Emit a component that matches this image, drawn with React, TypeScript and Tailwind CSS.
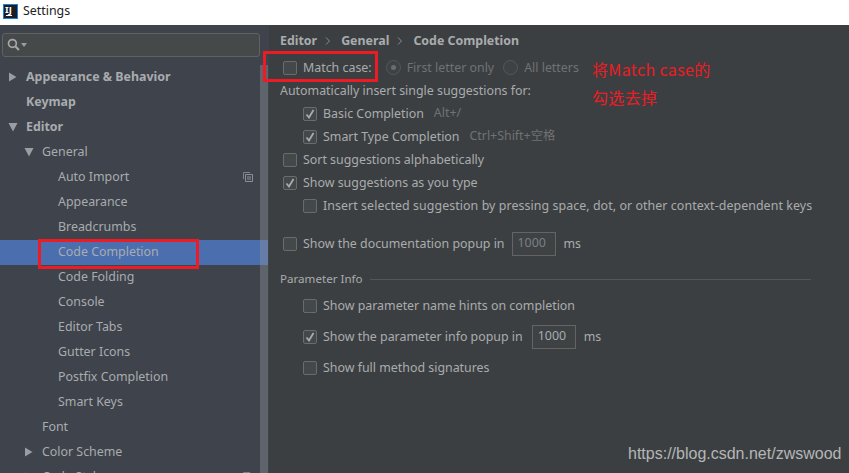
import React from "react";

type NavItem = {
  label: string;
  level: number;
  arrow?: "right" | "down";
  bold?: boolean;
  copy?: boolean;
  selected?: boolean;
};

const navItems: NavItem[] = [
  { label: "Appearance & Behavior", level: 0, arrow: "right", bold: true },
  { label: "Keymap", level: 0, bold: true },
  { label: "Editor", level: 0, arrow: "down", bold: true },
  { label: "General", level: 1, arrow: "down" },
  { label: "Auto Import", level: 2, copy: true },
  { label: "Appearance", level: 2 },
  { label: "Breadcrumbs", level: 2 },
  { label: "Code Completion", level: 2, selected: true },
  { label: "Code Folding", level: 2 },
  { label: "Console", level: 2 },
  { label: "Editor Tabs", level: 2 },
  { label: "Gutter Icons", level: 2 },
  { label: "Postfix Completion", level: 2 },
  { label: "Smart Keys", level: 2 },
  { label: "Font", level: 1 },
  { label: "Color Scheme", level: 1, arrow: "right" },
  { label: "Code Style", level: 1, arrow: "right", copy: true },
];

const Arrow = ({ dir }: { dir: "right" | "down" }) => (
  <svg width="10" height="10" viewBox="0 0 10 10" className="shrink-0">
    {dir === "right" ? (
      <path d="M1 0.5 L8.5 5 L1 9.5 Z" fill="#9a9da1" />
    ) : (
      <path d="M0.5 1 L9.5 1 L5 9.5 Z" fill="#9a9da1" />
    )}
  </svg>
);

const CopyIcon = () => (
  <svg width="10" height="10" viewBox="0 0 10 10" className="absolute left-[243px] top-[7px]">
    <path d="M0.5 7 V0.5 H7" fill="none" stroke="#7f8387" />
    <path d="M2.5 2.5 H9.5 V9.5 H2.5 Z M4 5 H8 M4 7 H8" fill="none" stroke="#8d9195" />
  </svg>
);

const Checkbox = ({ checked }: { checked?: boolean }) => (
  <span className="flex h-[14px] w-[14px] shrink-0 items-center justify-center rounded-[2px] border border-[#6b6b6b] bg-[#43494a]">
    {checked && (
      <svg width="10" height="10" viewBox="0 0 10 10">
        <path d="M1.5 5.5 L4 8.5 L8.5 1" fill="none" stroke="#a9abad" strokeWidth="1.8" />
      </svg>
    )}
  </span>
);

const Radio = ({ checked }: { checked?: boolean }) => (
  <span className="flex h-[15px] w-[15px] shrink-0 items-center justify-center rounded-full border border-[#555859] bg-[#3e4244]">
    {checked && <span className="h-[5px] w-[5px] rounded-full bg-[#6a6d6f]" />}
  </span>
);

const Chevron = () => (
  <svg width="6" height="8" viewBox="0 0 6 8" className="shrink-0">
    <path d="M1 0.5 L4.5 4 L1 7.5" fill="none" stroke="#8b8e90" />
  </svg>
);

const NumberBox = ({ dim }: { dim?: boolean }) => (
  <span
    className={`flex h-[24px] w-[44px] shrink-0 items-center border border-[#646464] bg-[#3e4244] pb-[2px] pl-[5px] leading-none ${dim ? "text-[#7c7f81]" : "text-[#a8abad]"}`}
  >
    1000
  </span>
);

const Option = ({
  label,
  checked,
  nested,
  hint,
  wide,
}: {
  label: string;
  checked?: boolean;
  nested?: boolean;
  hint?: string;
  wide?: boolean;
}) => (
  <div className={`flex h-[23px] items-center gap-[6px] whitespace-nowrap ${nested ? "pl-[23px]" : "pl-[3px]"}`}>
    <Checkbox checked={checked} />
    <span className={`mt-[2px] ${wide ? "tracking-[0.07px]" : ""}`}>{label}</span>
    {hint && <span className="ml-[4px] text-[#6f7274]">{hint}</span>}
  </div>
);

export default function App() {
  return (
    <div
      className="relative flex h-[473px] w-[849px] flex-col overflow-hidden bg-white text-[12.4px] text-[#a9acae]"
      style={{ fontFamily: '"Noto Sans", "Noto Sans CJK SC", sans-serif' }}
    >
      {/* TITLE BAR */}
      <div className="flex h-[25px] shrink-0 items-center gap-[5px] bg-white pb-[3px] pl-[3px] text-[#222]">
        <div className="relative h-[15px] w-[15px] border border-[#1f7fe0] bg-[#1b1f24]">
          <span className="absolute left-[1px] top-0 text-[9.5px] font-bold leading-[9px] text-white">IJ</span>
          <span className="absolute bottom-[2px] left-[2px] h-px w-[6px] bg-white" />
        </div>
        <span>Settings</span>
      </div>

      <div className="flex min-h-0 flex-1">
        {/* SIDEBAR */}
        <div className="relative flex w-[269px] shrink-0 flex-col bg-[#3e434c]">
          <div className="mx-[2px] mb-[8px] mt-[8px] flex h-[24px] w-[258px] shrink-0 items-center gap-px rounded-[3px] border border-[#5f6262] bg-[#45494a] pb-[1px] pl-[4px]">
            <svg width="13" height="13" viewBox="0 0 12 12">
              <circle cx="5" cy="5" r="3.6" fill="none" stroke="#a4a6a8" strokeWidth="1.6" />
              <path d="M7.8 7.8 L11 11" stroke="#a4a6a8" strokeWidth="2" />
            </svg>
            <svg width="6" height="4" viewBox="0 0 6 4">
              <path d="M0 0 H6 L3 4 Z" fill="#9a9da1" />
            </svg>
          </div>
          {navItems.map((item) => (
            <div
              key={item.label}
              className={`relative flex h-[25px] w-[268px] shrink-0 items-center ${item.selected ? "bg-[#4b6eaf]" : ""} ${item.bold ? "font-bold" : ""}`}
            >
              {item.arrow && (
                <span className={`absolute top-[7px] ${item.level === 0 ? "left-[8px]" : "left-[24px]"}`}>
                  <Arrow dir={item.arrow} />
                </span>
              )}
              <span className={item.level === 0 ? "pl-[26px]" : item.level === 1 ? "pl-[42px]" : "pl-[58px]"}>
                {item.label}
              </span>
              {item.copy && <CopyIcon />}
            </div>
          ))}
          {/* SCROLLBAR */}
          <div className="absolute bottom-0 left-[260px] top-[40px] w-[8px] bg-[#8f949e]/40" />
        </div>

        {/* CONTENT */}
        <div className="flex min-w-0 flex-1 flex-col bg-[#3c3f41] pl-[11px] pr-[38px] pt-[3px]">
          <div className="mb-[2px] flex h-[26px] items-center font-bold text-[#a9acae]">
            <span>Editor</span>
            <span className="ml-[8px] mr-[10px]"><Chevron /></span>
            <span>General</span>
            <span className="ml-[8px] mr-[10px]"><Chevron /></span>
            <span>Code Completion</span>
          </div>

          <div className="flex h-[23px] items-center pl-[3px]">
            <Checkbox />
            <span className="ml-[6px] mt-[1px]">Match case:</span>
            <span className="ml-[14px]"><Radio checked /></span>
            <span className="ml-[6px] mt-[1px] text-[#6f7274]">First letter only</span>
            <span className="ml-[9px]"><Radio /></span>
            <span className="ml-[6px] mt-[1px] text-[#6f7274]">All letters</span>
          </div>
          <div className="flex h-[23px] items-center pt-[2px]">Automatically insert single suggestions for:</div>
          <Option label="Basic Completion" checked nested hint="Alt+/" />
          <Option label="Smart Type Completion" checked nested hint="Ctrl+Shift+空格" />
          <Option label="Sort suggestions alphabetically" />
          <Option label="Show suggestions as you type" checked />
          <Option label="Insert selected suggestion by pressing space, dot, or other context-dependent keys" nested wide />

          <div className="mt-[15px] flex h-[24px] items-center pl-[3px]">
            <Checkbox />
            <span className="ml-[6px]">Show the documentation popup in</span>
            <span className="ml-[7px]"><NumberBox dim /></span>
            <span className="ml-[8px]">ms</span>
          </div>

          <div className="mt-[13px] flex h-[20px] items-center gap-[7px] text-[11.6px]">
            <span>Parameter Info</span>
            <div className="h-px flex-1 bg-[#535658]" />
          </div>

          <div className="mt-[5px]">
            <Option label="Show parameter name hints on completion" nested />
          </div>
          <div className="mt-[8px] flex h-[24px] items-center pl-[23px]">
            <Checkbox checked />
            <span className="ml-[6px]">Show the parameter info popup in</span>
            <span className="ml-[9px]"><NumberBox /></span>
            <span className="ml-[8px]">ms</span>
          </div>
          <div className="mt-[7px]">
            <Option label="Show full method signatures" nested />
          </div>
        </div>
      </div>

      {/* ANNOTATIONS */}
      <div className="absolute left-[263px] top-[51px] h-[31px] w-[115px] border-[3px] border-[#ed1c24]" />
      <div className="absolute left-[38px] top-[239px] h-[30px] w-[161px] border-[3px] border-[#ed1c24]" />
      <div
        className="absolute left-[592px] top-[55px] text-[16px] leading-[28px] tracking-[0.35px] text-[#ed1c24]"
        style={{ fontFamily: '"Noto Sans CJK SC", sans-serif' }}
      >
        <div>将Match case的</div>
        <div>勾选去掉</div>
      </div>
      <div
        className="absolute left-[628px] top-[443px] text-[16px] leading-[22px] text-[#b4b6b7]"
        style={{ fontFamily: '"Liberation Sans", sans-serif' }}
      >
        https://blog.csdn.net/zwswood
      </div>
    </div>
  );
}
